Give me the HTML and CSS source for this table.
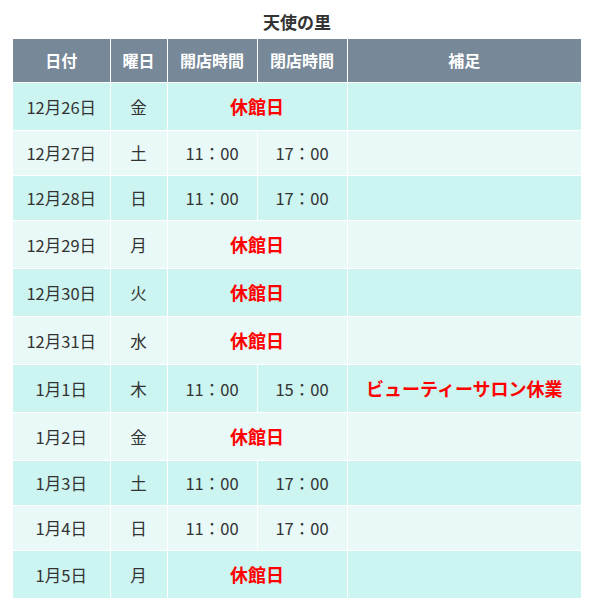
FILE: index.html
```html
<!DOCTYPE html>
<html lang="ja">
<head>
<meta charset="utf-8">
<title>天使の里</title>
<link rel="stylesheet" href="styles.css">
</head>
<body>
<div class="wrap">
  <h2 class="title">天使の里</h2>
  <table class="schedule">
    <colgroup>
      <col class="c-date"><col class="c-day"><col class="c-time"><col class="c-time"><col class="c-note">
    </colgroup>
    <thead>
      <tr><th>日付</th><th>曜日</th><th>開店時間</th><th>閉店時間</th><th>補足</th></tr>
    </thead>
    <tbody>
      <tr class="odd"><td>12月26日</td><td>金</td><td colspan="2" class="closed">休館日</td><td></td></tr>
      <tr class="even"><td>12月27日</td><td>土</td><td>11：00</td><td>17：00</td><td></td></tr>
      <tr class="odd"><td>12月28日</td><td>日</td><td>11：00</td><td>17：00</td><td></td></tr>
      <tr class="even"><td>12月29日</td><td>月</td><td colspan="2" class="closed">休館日</td><td></td></tr>
      <tr class="odd"><td>12月30日</td><td>火</td><td colspan="2" class="closed">休館日</td><td></td></tr>
      <tr class="even"><td>12月31日</td><td>水</td><td colspan="2" class="closed">休館日</td><td></td></tr>
      <tr class="odd"><td>1月1日</td><td>木</td><td>11：00</td><td>15：00</td><td class="closed">ビューティーサロン休業</td></tr>
      <tr class="even"><td>1月2日</td><td>金</td><td colspan="2" class="closed">休館日</td><td></td></tr>
      <tr class="odd"><td>1月3日</td><td>土</td><td>11：00</td><td>17：00</td><td></td></tr>
      <tr class="even"><td>1月4日</td><td>日</td><td>11：00</td><td>17：00</td><td></td></tr>
      <tr class="odd"><td>1月5日</td><td>月</td><td colspan="2" class="closed">休館日</td><td></td></tr>
    </tbody>
  </table>
</div>
</body>
</html>
```

FILE: styles.css
```css
html, body {
  margin: 0;
  padding: 0;
  background: #ffffff;
}

body {
  font-family: "Noto Sans CJK JP", sans-serif;
  color: #333333;
}

.wrap {
  padding: 10px 11px 0 13px;
}

.title {
  margin: 0 0 6px 0;
  font-size: 17px;
  line-height: 23px;
  font-weight: bold;
  text-align: center;
  color: #333333;
}

.schedule {
  width: 568px;
  border-collapse: collapse;
  table-layout: fixed;
}

.c-date { width: 97px; }
.c-day { width: 57px; }
.c-time { width: 90px; }
.c-note { width: 234px; }

.schedule th,
.schedule td {
  border: 1px solid #ffffff;
  text-align: center;
  padding: 10px 0;
  font-size: 16.5px;
  line-height: 24px;
}

.schedule tr > :first-child { border-left: none; }
.schedule tr > :last-child { border-right: none; }
.schedule thead tr > * { border-top: none; }
.schedule tbody tr:last-child > * { border-bottom: none; }

.schedule th {
  background: #778899;
  color: #ffffff;
  font-weight: bold;
  font-size: 16px;
  line-height: 23px;
}

.odd td { background: #ccf4f0; }
.even td { background: #e8f9f7; }

.schedule td.closed {
  color: #ff0000;
  font-weight: bold;
  font-size: 18px;
  line-height: 27px;
}
```
